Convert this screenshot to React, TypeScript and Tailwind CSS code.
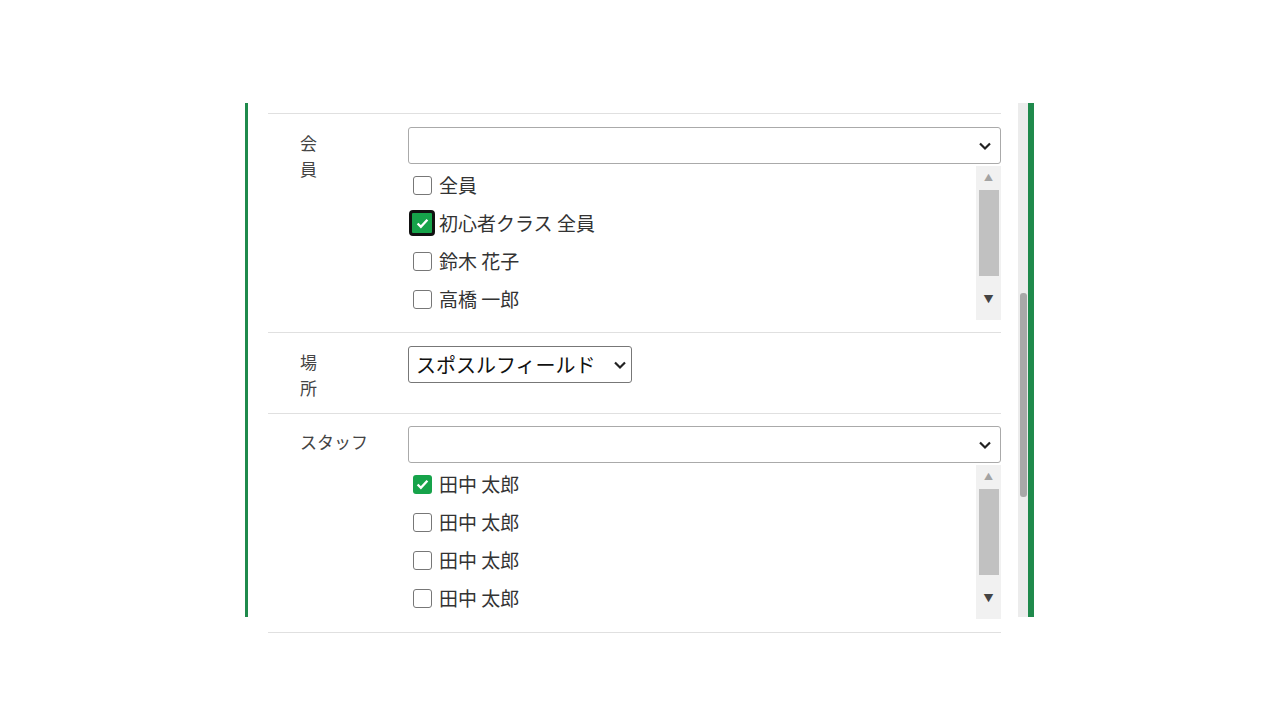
import React from "react";

const font = { fontFamily: '"Noto Sans CJK JP", "Noto Sans", sans-serif' };

const Chevron = () => (
  <svg width="14" height="10" viewBox="0 0 14 10" className="absolute right-[8px] top-1/2 -translate-y-1/2">
    <path d="M2 2.5 L7 7.5 L12 2.5" stroke="#222" strokeWidth="2.2" fill="none" />
  </svg>
);

const Box = ({ checked, focus }: { checked?: boolean; focus?: boolean }) =>
  checked ? (
    <span
      className={
        "flex items-center justify-center bg-[#16a34a] rounded-[3px] " +
        (focus ? "w-[26px] h-[26px] border-[3px] border-[#111] rounded-[4px]" : "w-[19px] h-[19px]")
      }
    >
      <svg width="13" height="11" viewBox="0 0 12 10">
        <path d="M1.5 5 L4.5 8 L10.5 1.5" stroke="#fff" strokeWidth="2.2" fill="none" />
      </svg>
    </span>
  ) : (
    <span className="w-[19px] h-[19px] border-[1.5px] border-[#777] rounded-[3px] bg-white" />
  );

const ListBox = ({ items }: { items: { t: string; c?: boolean; f?: boolean }[] }) => (
  <div className="flex h-[154px] mt-[2px]">
    <div className="flex-1 flex flex-col">
      {items.map((it, i) => (
        <div key={i} className="h-[38px] flex items-center gap-[6px] pl-[1px] text-[19px] text-[#333]">
          <span className="w-[26px] flex justify-center">
            <Box checked={it.c} focus={it.f} />
          </span>
          <span className="-ml-[2px]">{it.t}</span>
        </div>
      ))}
    </div>
    <div className="w-[25px] bg-[#f1f1f1] flex flex-col items-center">
      <div className="h-[24px] flex items-center text-[9px] text-[#a3a3a3]">▲</div>
      <div className="w-[20px] h-[86px] bg-[#c1c1c1]" />
      <div className="flex-1 flex items-center text-[10px] text-[#444]">▼</div>
    </div>
  </div>
);

export default function App() {
  return (
    <div className="w-[1280px] h-[720px] bg-white relative" style={font}>
      <div className="absolute left-[245px] top-[103px] w-[789px] h-[514px] flex border-l-[3px] border-[#1f8a4c]">
        <div className="flex-1 pl-[20px] pr-[17px] pt-[10px]">
          <div className="border-t border-[#e0e0e0] pt-[13px] pb-[12px] flex">
            <div className="w-[140px] pl-[32px] pt-[3px] text-[17px] text-[#444] tracking-[2.3em]">会員</div>
            <div className="flex-1">
              <div className="relative h-[37px] border border-[#aaa] rounded-[3px]"><Chevron /></div>
              <ListBox
                items={[
                  { t: "全員" },
                  { t: "初心者クラス 全員", c: true, f: true },
                  { t: "鈴木 花子" },
                  { t: "高橋 一郎" },
                ]}
              />
            </div>
          </div>
          <div className="border-t border-[#e0e0e0] py-[13px] flex">
            <div className="w-[140px] pl-[32px] pt-[3px] text-[17px] text-[#444] tracking-[2.3em]">場所</div>
            <div className="relative w-[224px] h-[37px] border border-[#777] rounded-[3px] flex items-center pl-[7px] text-[20px] text-[#111]">
              スポスルフィールド
              <svg width="14" height="10" viewBox="0 0 14 10" className="absolute right-[4px] top-1/2 -translate-y-1/2 bg-white">
                <path d="M2 2.5 L7 7.5 L12 2.5" stroke="#222" strokeWidth="2.2" fill="none" />
              </svg>
            </div>
          </div>
          <div className="border-t border-[#e0e0e0] pt-[12px] pb-[13px] flex border-b">
            <div className="w-[140px] pl-[32px] pt-[3px] text-[17px] text-[#444]">スタッフ</div>
            <div className="flex-1">
              <div className="relative h-[37px] border border-[#aaa] rounded-[3px]"><Chevron /></div>
              <ListBox
                items={[
                  { t: "田中 太郎", c: true },
                  { t: "田中 太郎" },
                  { t: "田中 太郎" },
                  { t: "田中 太郎" },
                ]}
              />
            </div>
          </div>
        </div>
        <div className="w-[10px] bg-[#ececec] pt-[190px]">
          <div className="mx-auto w-[7px] h-[204px] bg-[#a8a8a8] rounded-[3px]" />
        </div>
        <div className="w-[6px] bg-[#1f8a4c]" />
      </div>
    </div>
  );
}
